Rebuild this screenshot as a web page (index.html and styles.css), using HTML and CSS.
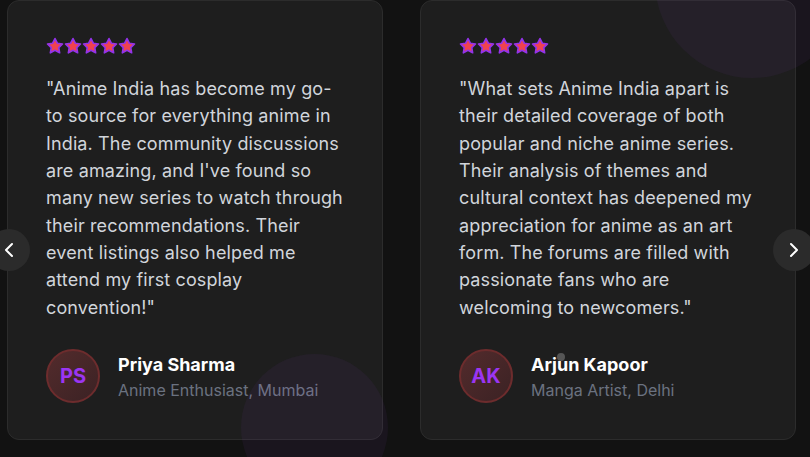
FILE: index.html
```html
<!DOCTYPE html>
<html lang="en">
<head>
<meta charset="utf-8">
<title>Testimonials</title>
<link rel="stylesheet" href="styles.css">
</head>
<body>
<section class="carousel">
  <div class="track">
    <article class="card">
      <span class="blob blob-bottom"></span>
      <div class="stars">
        <svg viewBox="0 0 24 24"><path d="M12 2l3.09 6.26L22 9.27l-5 4.87 1.18 6.88L12 17.77l-6.18 3.25L7 14.14 2 9.27l6.91-1.01L12 2z"/></svg>
        <svg viewBox="0 0 24 24"><path d="M12 2l3.09 6.26L22 9.27l-5 4.87 1.18 6.88L12 17.77l-6.18 3.25L7 14.14 2 9.27l6.91-1.01L12 2z"/></svg>
        <svg viewBox="0 0 24 24"><path d="M12 2l3.09 6.26L22 9.27l-5 4.87 1.18 6.88L12 17.77l-6.18 3.25L7 14.14 2 9.27l6.91-1.01L12 2z"/></svg>
        <svg viewBox="0 0 24 24"><path d="M12 2l3.09 6.26L22 9.27l-5 4.87 1.18 6.88L12 17.77l-6.18 3.25L7 14.14 2 9.27l6.91-1.01L12 2z"/></svg>
        <svg viewBox="0 0 24 24"><path d="M12 2l3.09 6.26L22 9.27l-5 4.87 1.18 6.88L12 17.77l-6.18 3.25L7 14.14 2 9.27l6.91-1.01L12 2z"/></svg>
      </div>
      <p class="quote">"Anime India has become my go-to source for everything anime in India. The community discussions are amazing, and I've found so many new series to watch through their recommendations. Their event listings also helped me attend my first cosplay convention!"</p>
      <div class="author">
        <div class="avatar">PS</div>
        <div class="info">
          <div class="name">Priya Sharma</div>
          <div class="role">Anime Enthusiast, Mumbai</div>
        </div>
      </div>
    </article>
    <article class="card">
      <span class="blob blob-top"></span>
      <span class="dot"></span>
      <div class="stars">
        <svg viewBox="0 0 24 24"><path d="M12 2l3.09 6.26L22 9.27l-5 4.87 1.18 6.88L12 17.77l-6.18 3.25L7 14.14 2 9.27l6.91-1.01L12 2z"/></svg>
        <svg viewBox="0 0 24 24"><path d="M12 2l3.09 6.26L22 9.27l-5 4.87 1.18 6.88L12 17.77l-6.18 3.25L7 14.14 2 9.27l6.91-1.01L12 2z"/></svg>
        <svg viewBox="0 0 24 24"><path d="M12 2l3.09 6.26L22 9.27l-5 4.87 1.18 6.88L12 17.77l-6.18 3.25L7 14.14 2 9.27l6.91-1.01L12 2z"/></svg>
        <svg viewBox="0 0 24 24"><path d="M12 2l3.09 6.26L22 9.27l-5 4.87 1.18 6.88L12 17.77l-6.18 3.25L7 14.14 2 9.27l6.91-1.01L12 2z"/></svg>
        <svg viewBox="0 0 24 24"><path d="M12 2l3.09 6.26L22 9.27l-5 4.87 1.18 6.88L12 17.77l-6.18 3.25L7 14.14 2 9.27l6.91-1.01L12 2z"/></svg>
      </div>
      <p class="quote">"What sets Anime India apart is their detailed coverage of both popular and niche anime series. Their analysis of themes and cultural context has deepened my appreciation for anime as an art form. The forums are filled with passionate fans who are welcoming to newcomers."</p>
      <div class="author">
        <div class="avatar">AK</div>
        <div class="info">
          <div class="name">Arjun Kapoor</div>
          <div class="role">Manga Artist, Delhi</div>
        </div>
      </div>
    </article>
  </div>
  <button class="nav nav-prev" aria-label="Previous">
    <svg viewBox="0 0 24 24"><path d="m15 18-6-6 6-6"/></svg>
  </button>
  <button class="nav nav-next" aria-label="Next">
    <svg viewBox="0 0 24 24"><path d="m9 18 6-6-6-6"/></svg>
  </button>
</section>
</body>
</html>
```

FILE: styles.css
```css
* { box-sizing: border-box; }

html, body {
  margin: 0;
  padding: 0;
  background: #121212;
  width: 810px;
  height: 457px;
  overflow: hidden;
  font-family: Inter, "Noto Sans", sans-serif;
}

.carousel {
  position: relative;
  width: 810px;
  height: 457px;
  overflow: hidden;
}

.track {
  display: flex;
  gap: 37px;
  padding-left: 7px;
  align-items: flex-start;
}

.card {
  position: relative;
  flex: 0 0 376px;
  width: 376px;
  background: #1e1e1e;
  border: 1px solid #2c2c2c;
  border-radius: 12px;
  padding: 36px 38px 36px 38px;
}

.blob {
  position: absolute;
  border-radius: 50%;
  background: rgba(168, 85, 247, 0.05);
  pointer-events: none;
}

.blob-bottom {
  width: 147px;
  height: 147px;
  left: 233px;
  top: 353px;
}

.blob-top {
  width: 194px;
  height: 194px;
  left: 234px;
  top: -117px;
}

.dot {
  position: absolute;
  width: 8px;
  height: 8px;
  border-radius: 50%;
  background: #555;
  left: 136px;
  top: 352px;
  z-index: 2;
}

.stars {
  display: flex;
  height: 18px;
  margin-bottom: 20px;
}

.stars svg {
  width: 18px;
  height: 18px;
  fill: #f0424f;
  stroke: #9333ea;
  stroke-width: 2.2;
  stroke-linejoin: round;
}

.quote {
  margin: 0 0 28px;
  color: #d1d5db;
  font-size: 18px;
  line-height: 27.35px;
  letter-spacing: 0.13px;
}

.author {
  display: flex;
  align-items: center;
  gap: 18px;
}

.avatar {
  width: 54px;
  height: 54px;
  border-radius: 50%;
  flex: 0 0 54px;
  display: flex;
  align-items: center;
  justify-content: center;
  background: linear-gradient(135deg, #532b2c, #3b2224);
  border: 2px solid #6d2c2d;
  color: #9b35f2;
  font-weight: 700;
  font-size: 20px;
}

.info {
  display: flex;
  flex-direction: column;
}

.name {
  color: #ffffff;
  font-weight: 700;
  font-size: 18px;
  line-height: 27px;
}

.role {
  color: #6b7280;
  font-size: 16px;
  line-height: 24px;
}

.nav {
  position: absolute;
  top: 229px;
  width: 42px;
  height: 42px;
  border-radius: 50%;
  border: none;
  padding: 0;
  background: #2b2b2b;
  display: flex;
  align-items: center;
  justify-content: center;
  cursor: pointer;
}

.nav svg {
  width: 24px;
  height: 24px;
  fill: none;
  stroke: #ffffff;
  stroke-width: 2;
  stroke-linecap: round;
  stroke-linejoin: round;
}

.nav-prev { left: -12px; }
.nav-next { left: 773px; }
```
